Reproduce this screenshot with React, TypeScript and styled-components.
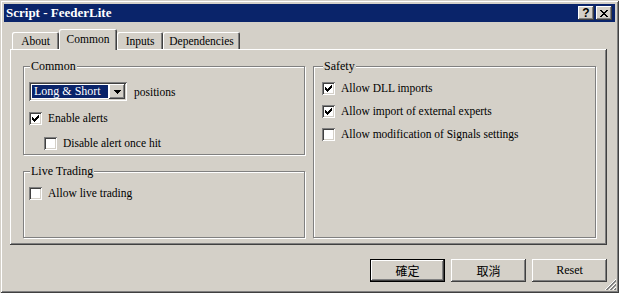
import React from "react";
import styled, { createGlobalStyle, css } from "styled-components";

const GlobalStyle = createGlobalStyle`
    html, body {
        margin: 0;
        padding: 0;
        background: #d4d0c8;
    }
    body {
        font-family: "Liberation Serif", "Noto Sans CJK TC", serif;
        font-size: 11.5px;
        color: #000;
    }
`;

// classic 3d edges
const raisedEdge = css`
    box-shadow: inset -1px -1px #404040, inset 1px 1px #fff,
        inset -2px -2px #808080, inset 2px 2px #d4d0c8;
`;

const sunkenEdge = css`
    box-shadow: inset 1px 1px #808080, inset -1px -1px #fff,
        inset 2px 2px #404040, inset -2px -2px #d4d0c8;
`;

const Window = styled.div`
    position: relative;
    width: 619px;
    height: 293px;
    box-sizing: border-box;
    padding: 4px;
    background: #d4d0c8;
    box-shadow: inset 1px 1px #d4d0c8, inset -1px -1px #404040,
        inset 2px 2px #fff, inset -2px -2px #808080;
    display: flex;
    flex-direction: column;
`;

const TitleBar = styled.div`
    height: 18px;
    background: #0a246a;
    display: flex;
    align-items: center;
    padding: 0 3px 0 2px;
`;

const TitleText = styled.div`
    flex: 1;
    color: #fff;
    font-weight: bold;
    font-size: 13px;
    line-height: 18px;
`;

const CaptionButton = styled.div`
    width: 16px;
    height: 14px;
    box-sizing: border-box;
    background: #d4d0c8;
    ${raisedEdge};
    display: flex;
    align-items: center;
    justify-content: center;
    font-family: "Liberation Sans", sans-serif;
    font-weight: bold;
    font-size: 12px;
    line-height: 14px;
    & + & {
        margin-left: 2px;
    }
`;

const Body = styled.div`
    flex: 1;
    display: flex;
    flex-direction: column;
    padding: 7px 8px 0 6px;
`;

const TabStrip = styled.div`
    height: 20px;
    display: flex;
    align-items: flex-end;
    padding-left: 2px;
    position: relative;
    z-index: 1;
`;

const Tab = styled.div<{ $width: number; $active?: boolean }>`
    width: ${p => p.$width}px;
    height: ${p => (p.$active ? 21 : 17)}px;
    margin-bottom: ${p => (p.$active ? -1 : 0)}px;
    box-sizing: border-box;
    background: #d4d0c8;
    border-top-left-radius: 2px;
    border-top-right-radius: 2px;
    box-shadow: inset 1px 1px #fff, inset -1px 0 #404040, inset -2px 0 #808080;
    display: flex;
    align-items: ${p => (p.$active ? "flex-start" : "center")};
    justify-content: center;
    padding-top: ${p => (p.$active ? 3 : 1)}px;
    line-height: 14px;
`;

const Panel = styled.div`
    width: 597px;
    height: 196px;
    box-sizing: border-box;
    padding: 17px 10px 7px 13px;
    ${raisedEdge};
    display: grid;
    grid-template-columns: 282px 283px;
    column-gap: 8px;
`;

const Column = styled.div`
    display: flex;
    flex-direction: column;
    gap: 16px;
`;

const GroupBox = styled.div<{ $height: number; $inset?: number }>`
    height: ${p => p.$height}px;
    box-sizing: border-box;
    border: 1px solid #808080;
    box-shadow: inset 1px 1px #fff, 1px 1px #fff;
    padding: 0 6px 0 ${p => p.$inset || 5}px;
`;

const GroupTitle = styled.div`
    width: fit-content;
    height: 13px;
    line-height: 13px;
    margin: -7px 0 0 1px;
    padding: 0 1px;
    background: #d4d0c8;
    font-size: 12px;
`;

const GroupBody = styled.div<{ $gap: number }>`
    margin-top: 9px;
    display: flex;
    flex-direction: column;
    gap: ${p => p.$gap}px;
`;

const Row = styled.div<{ $indent?: number; $push?: number }>`
    display: flex;
    align-items: center;
    height: 13px;
    line-height: 13px;
    padding-left: ${p => p.$indent || 0}px;
    margin-top: ${p => p.$push || 0}px;
    white-space: nowrap;
`;

const Box = styled.div`
    width: 13px;
    height: 13px;
    flex: none;
    box-sizing: border-box;
    background: #fff;
    ${sunkenEdge};
    margin-right: 6px;
    display: flex;
    align-items: center;
    justify-content: center;
`;

const ComboRow = styled.div`
    display: flex;
    align-items: center;
    height: 19px;
`;

const Combo = styled.div`
    width: 98px;
    height: 19px;
    box-sizing: border-box;
    background: #fff;
    ${sunkenEdge};
    padding: 2px;
    display: flex;
    margin-right: 7px;
`;

const ComboValue = styled.div`
    flex: 1;
    margin: 1px;
    background: #0a246a;
    color: #fff;
    line-height: 13px;
    padding-left: 2px;
    font-size: 12px;
`;

const ComboArrow = styled.div`
    width: 16px;
    box-sizing: border-box;
    background: #d4d0c8;
    ${raisedEdge};
    display: flex;
    align-items: center;
    justify-content: center;
`;

const ButtonRow = styled.div`
    width: 597px;
    display: flex;
    justify-content: flex-end;
    gap: 6px;
    margin-top: 14px;
`;

const Button = styled.div<{ $default?: boolean }>`
    width: 75px;
    height: 23px;
    box-sizing: border-box;
    background: #d4d0c8;
    display: flex;
    align-items: center;
    justify-content: center;
    font-size: 12px;
    box-shadow: inset -1px -1px #404040, inset 1px 1px #fff,
        inset -2px -2px #808080;
    ${p =>
        p.$default &&
        css`
            border: 1px solid #000;
        `}
`;

const Cjk = styled.span`
    font-family: "Noto Sans CJK TC", sans-serif;
    font-size: 12px;
`;

const Grip = styled.svg`
    position: absolute;
    right: 3px;
    bottom: 3px;
`;

function Check() {
    return (
        <svg width="7" height="7" viewBox="0 0 7 7" shapeRendering="crispEdges">
            <path d="M0 2h1v3h-1z M1 3h1v3h-1z M2 4h1v3h-1z M3 3h1v3h-1z M4 2h1v3h-1z M5 1h1v3h-1z M6 0h1v3h-1z" fill="#000" />
        </svg>
    );
}

function CheckBox(props: { label: string; checked?: boolean; indent?: number; push?: number }) {
    return (
        <Row $indent={props.indent} $push={props.push}>
            <Box>{props.checked && <Check />}</Box>
            {props.label}
        </Row>
    );
}

// diagonal pixels for the size grip
function gripPixels(offset: number, color: string) {
    const cells = [];
    for (let i = offset; i < 11; i++) {
        cells.push(<rect key={color + offset + i} x={i} y={10 - i + offset} width="1" height="1" fill={color} />);
    }
    return cells;
}

export default function App() {
    return (
        <>
            <GlobalStyle />
            <Window>
                <TitleBar>
                    <TitleText>Script - FeederLite</TitleText>
                    <CaptionButton>?</CaptionButton>
                    <CaptionButton>
                        <svg width="8" height="7" viewBox="0 0 8 7" shapeRendering="crispEdges">
                            <path d="M0 0h2v1h-2z M6 0h2v1h-2z M1 1h2v1h-2z M5 1h2v1h-2z M2 2h4v1h-4z M3 3h2v1h-2z M2 4h4v1h-4z M1 5h2v1h-2z M5 5h2v1h-2z M0 6h2v1h-2z M6 6h2v1h-2z" fill="#000" />
                        </svg>
                    </CaptionButton>
                </TitleBar>
                <Body>
                    <TabStrip>
                        <Tab $width={47}>About</Tab>
                        <Tab $width={58} $active>
                            Common
                        </Tab>
                        <Tab $width={46}>Inputs</Tab>
                        <Tab $width={77}>Dependencies</Tab>
                    </TabStrip>
                    <Panel>
                        <Column>
                            <GroupBox $height={89}>
                                <GroupTitle>Common</GroupTitle>
                                <GroupBody $gap={11}>
                                    <ComboRow>
                                        <Combo>
                                            <ComboValue>Long &amp; Short</ComboValue>
                                            <ComboArrow>
                                                <svg width="7" height="4" viewBox="0 0 7 4" shapeRendering="crispEdges">
                                                    <path d="M0 0h7v1h-7z M1 1h5v1h-5z M2 2h3v1h-3z M3 3h1v1h-1z" fill="#000" />
                                                </svg>
                                            </ComboArrow>
                                        </Combo>
                                        positions
                                    </ComboRow>
                                    <CheckBox label="Enable alerts" checked />
                                    <CheckBox label="Disable alert once hit" indent={15} push={1} />
                                </GroupBody>
                            </GroupBox>
                            <GroupBox $height={67}>
                                <GroupTitle>Live Trading</GroupTitle>
                                <GroupBody $gap={10}>
                                    <CheckBox label="Allow live trading" />
                                </GroupBody>
                            </GroupBox>
                        </Column>
                        <Column>
                            <GroupBox $height={172} $inset={8}>
                                <GroupTitle>Safety</GroupTitle>
                                <GroupBody $gap={10}>
                                    <CheckBox label="Allow DLL imports" checked />
                                    <CheckBox label="Allow import of external experts" checked />
                                    <CheckBox label="Allow modification of Signals settings" />
                                </GroupBody>
                            </GroupBox>
                        </Column>
                    </Panel>
                    <ButtonRow>
                        <Button $default>
                            <Cjk>確定</Cjk>
                        </Button>
                        <Button>
                            <Cjk>取消</Cjk>
                        </Button>
                        <Button>Reset</Button>
                    </ButtonRow>
                </Body>
                <Grip width="11" height="11" viewBox="0 0 11 11" shapeRendering="crispEdges">
                    {gripPixels(0, "#fff")}
                    {gripPixels(1, "#808080")}
                    {gripPixels(2, "#808080")}
                    {gripPixels(4, "#fff")}
                    {gripPixels(5, "#808080")}
                    {gripPixels(6, "#808080")}
                    {gripPixels(8, "#fff")}
                    {gripPixels(9, "#808080")}
                    {gripPixels(10, "#808080")}
                </Grip>
            </Window>
        </>
    );
}
